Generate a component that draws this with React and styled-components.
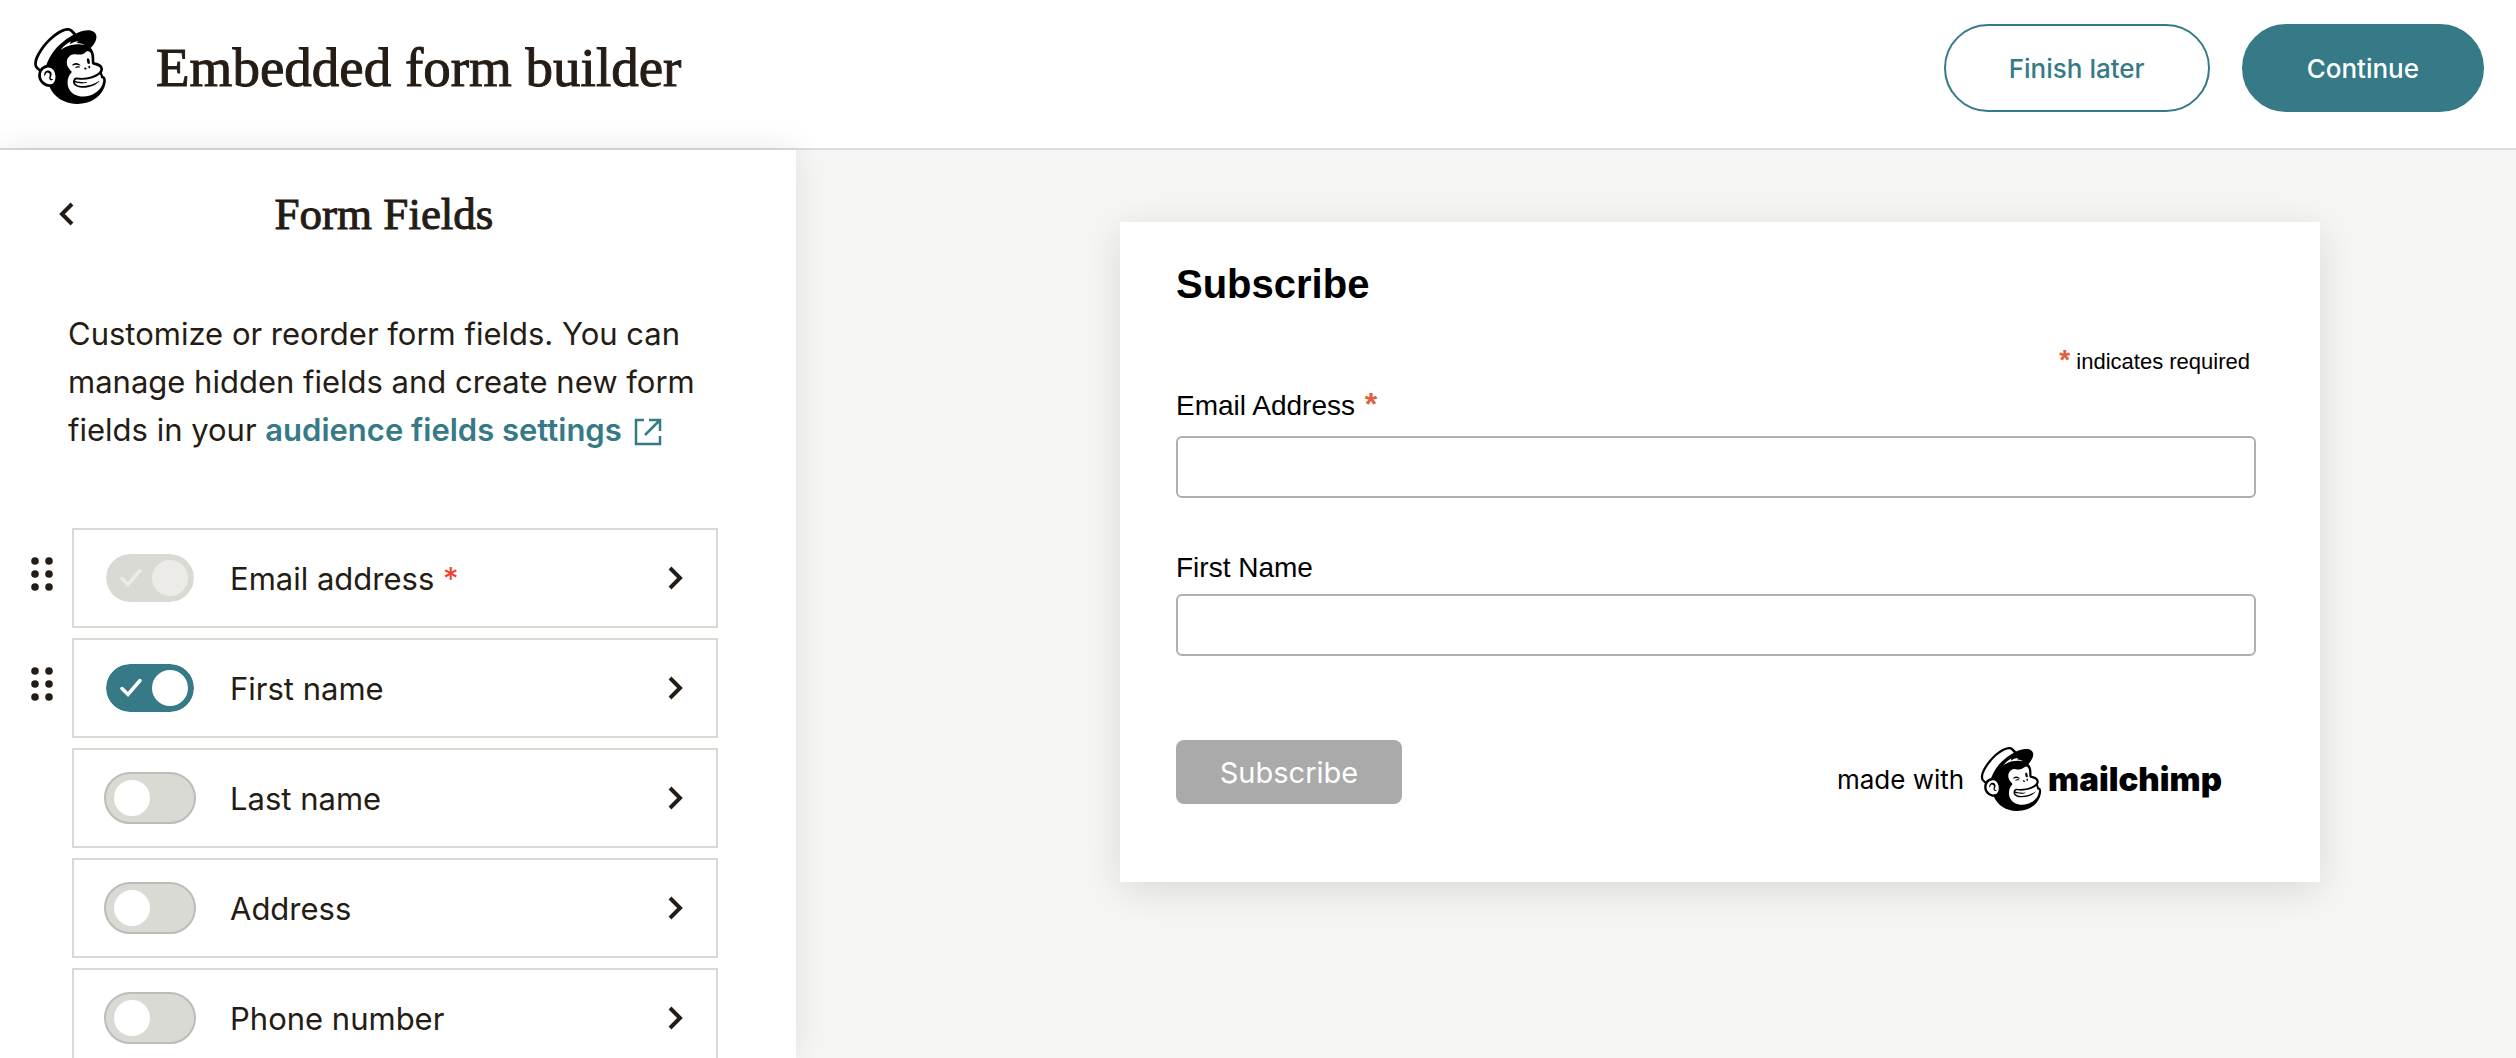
import React, { useState } from "react";
import styled, { createGlobalStyle } from "styled-components";
import { SiMailchimp } from "react-icons/si";

const GlobalStyle = createGlobalStyle`
  * {
    box-sizing: border-box;
  }

  body {
    margin: 0;
    background-color: #fff;
    color: #241c15;
    font-family: Inter, "Liberation Sans", sans-serif;
  }
`;

const Page = styled.div`
  display: flex;
  flex-direction: column;
  height: 100vh;
  overflow: hidden;
`;

const Header = styled.header`
  display: flex;
  flex-shrink: 0;
  align-items: flex-start;
  justify-content: space-between;
  height: 150px;
  padding: 24px 32px;
  border-bottom: 2px solid #dcdcdc;
`;

const Brand = styled.div`
  display: flex;
  align-items: center;
  gap: 48px;
  height: 84px;
`;

const Freddie = styled(SiMailchimp)`
  display: block;
  flex-shrink: 0;
  width: ${({ $size }) => $size}px;
  height: ${({ $size }) => $size}px;
  color: #000;
`;

const PageTitle = styled.h1`
  margin: 0;
  padding-top: 4px;
  font-family: "Liberation Serif", serif;
  font-size: 55px;
  font-weight: 400;
  line-height: 64px;
  -webkit-text-stroke: 1px currentColor;
`;

const Actions = styled.div`
  display: flex;
  gap: 32px;
`;

const Button = styled.button`
  height: 88px;
  padding: 0 63px;
  border: 2px solid #357a86;
  border-radius: 44px;
  background-color: ${({ $primary }) => ($primary ? "#357a86" : "#fff")};
  color: ${({ $primary }) => ($primary ? "#fff" : "#357a86")};
  font-family: inherit;
  font-size: 26px;
  font-weight: 500;
  cursor: pointer;
`;

const Main = styled.main`
  display: flex;
  flex: 1;
  min-height: 0;
`;

const Sidebar = styled.aside`
  z-index: 1;
  flex: 0 0 796px;
  padding: 32px 78px 0 30px;
  overflow-y: auto;
  scrollbar-width: none;
  background-color: #fff;
  box-shadow: 0 0 32px rgba(0, 0, 0, 0.1);
`;

const PanelHead = styled.div`
  display: grid;
  grid-template-columns: 48px 1fr 28px;
  align-items: center;
  height: 64px;
  padding: 0 12px;
`;

const IconButton = styled.button`
  display: flex;
  align-items: center;
  justify-content: center;
  width: 48px;
  height: 48px;
  padding: 0;
  border: none;
  background: none;
  color: #241c15;
  cursor: pointer;
`;

const PanelTitle = styled.h2`
  margin: 0;
  font-family: "Liberation Serif", serif;
  font-size: 45px;
  font-weight: 400;
  line-height: 48px;
  text-align: center;
  -webkit-text-stroke: 1px currentColor;
`;

const Intro = styled.p`
  margin: 64px 0 74px;
  padding-left: 38px;
  font-size: 31px;
  line-height: 48px;
`;

const SettingsLink = styled.a`
  color: #357a86;
  font-weight: 600;
  text-decoration: none;

  svg {
    margin-left: 12px;
    vertical-align: -5px;
  }
`;

const FieldList = styled.ul`
  display: flex;
  flex-direction: column;
  gap: 10px;
  margin: 0;
  padding: 0;
  list-style: none;
`;

const FieldItem = styled.li`
  display: grid;
  grid-template-columns: 24px 1fr;
  column-gap: 18px;
`;

const DragHandle = styled.span`
  padding-top: 28px;
  cursor: grab;
`;

const FieldCard = styled.div`
  display: flex;
  align-items: center;
  grid-column: 2;
  height: 100px;
  padding: 0 16px 0 30px;
  border: 2px solid #dadad4;
`;

const FieldName = styled.label`
  flex: 1;
  margin-left: 34px;
  font-size: 31px;
`;

const Asterisk = styled.span`
  color: #f03e2c;
`;

const Switch = styled.span`
  position: relative;
  display: flex;
  width: 92px;
  height: 52px;
`;

const SwitchInput = styled.input`
  appearance: none;
  display: flex;
  align-items: center;
  width: 92px;
  height: 52px;
  margin: 0;
  padding: 0 8px;
  border: 2px solid #bcbcb9;
  border-radius: 26px;
  background-color: #dadad4;
  cursor: pointer;

  &::before {
    content: "";
    width: 36px;
    height: 36px;
    border-radius: 50%;
    background-color: #fff;
  }

  &:checked {
    justify-content: flex-end;
    padding: 0 6px;
    border-color: #fff;
    background-color: #357a86;
    background-clip: padding-box;
  }

  &:disabled {
    background-color: #dadad4;
    cursor: default;
  }

  &:disabled::before {
    background-color: #ecebe8;
  }
`;

const SwitchCheck = styled.svg`
  position: absolute;
  top: 16px;
  left: 15px;
  color: ${({ $disabled }) => ($disabled ? "#ecebe8" : "#fff")};
  pointer-events: none;
`;

const Preview = styled.section`
  flex: 1;
  min-width: 0;
  padding: 72px 0 0 128px;
  background-color: #f6f6f4;
`;

const FormCard = styled.form`
  max-width: 1200px;
  min-height: 660px;
  margin: 0 auto;
  padding: 38px 64px 0 56px;
  background-color: #fff;
  box-shadow: 0 8px 40px rgba(0, 0, 0, 0.12);
  color: #000;
  font-family: "Liberation Sans", Arial, sans-serif;
`;

const FormTitle = styled.h2`
  margin: 0;
  font-size: 40px;
  line-height: 48px;
`;

const RequiredNote = styled.p`
  margin: 40px 6px 0 0;
  font-size: 22px;
  line-height: 28px;
  text-align: right;
`;

const RequiredMark = styled.span`
  margin-left: 2px;
  color: #e0603c;
  font-size: ${({ $size }) => $size}px;
  font-weight: 700;
  line-height: 1px;
`;

const FormField = styled.div`
  display: flex;
  flex-direction: column;
  gap: ${({ $gap }) => $gap}px;
  margin-top: ${({ $top }) => $top}px;
`;

const FormLabel = styled.label`
  font-size: 28px;
  line-height: 32px;
`;

const TextInput = styled.input`
  width: 100%;
  height: 62px;
  padding: 0 16px;
  border: 2px solid #abb0b2;
  border-radius: 6px;
  background-color: #fff;
  font-family: inherit;
  font-size: 28px;
`;

const FormFooter = styled.div`
  display: flex;
  align-items: flex-start;
  justify-content: space-between;
  margin-top: 84px;
`;

const SubmitButton = styled.button`
  width: 226px;
  height: 64px;
  padding: 0;
  border: none;
  border-radius: 8px;
  background-color: #aaa;
  color: #fff;
  font-family: Inter, sans-serif;
  font-size: 29px;
`;

const MadeWith = styled.a`
  display: flex;
  align-items: center;
  margin: 7px 34px 0 0;
  color: #000;
  font-family: Inter, sans-serif;
  font-size: 26px;
  text-decoration: none;

  svg {
    margin: 0 5px 0 15px;
  }
`;

const Wordmark = styled.span`
  font-size: 33px;
  font-weight: 900;
  line-height: 36px;
`;

const FIELDS = [
  { id: "email", name: "Email address", required: true, on: true, draggable: true },
  { id: "first", name: "First name", on: true, draggable: true },
  { id: "last", name: "Last name" },
  { id: "address", name: "Address" },
  { id: "phone", name: "Phone number" },
];

const Chevron = ({ left }) => (
  <svg width="16" height="24" viewBox="0 0 16 24" fill="none" stroke="currentColor" strokeWidth="4">
    <path d={left ? "M14 2 4 12 14 22" : "M2 2 12 12 2 22"} />
  </svg>
);

const ExternalIcon = () => (
  <svg width="28" height="28" viewBox="0 0 28 28" fill="none" stroke="currentColor" strokeWidth="2.500">
    <path d="M10 2H2V26H26V18M15 2H26V13M26 2 11 17" />
  </svg>
);

const DragDots = () => (
  <svg width="24" height="36" viewBox="0 0 24 36" fill="#241c15">
    {[5, 18, 31].map((y) => (
      <React.Fragment key={y}>
        <circle cx="5" cy={y} r="3.800" />
        <circle cx="19" cy={y} r="3.800" />
      </React.Fragment>
    ))}
  </svg>
);

const FieldRow = ({ field, checked, onToggle }) => {
  const inputId = `field-${field.id}`;
  return (
    <FieldItem>
      {field.draggable && (
        <DragHandle>
          <DragDots />
        </DragHandle>
      )}
      <FieldCard>
        <Switch>
          <SwitchInput
            type="checkbox"
            id={inputId}
            checked={checked}
            disabled={field.required}
            onChange={() => onToggle(field.id)}
          />
          {checked && (
            <SwitchCheck
              width="24"
              height="20"
              viewBox="0 0 24 20"
              fill="none"
              stroke="currentColor"
              strokeWidth="3.500"
              strokeLinecap="round"
              $disabled={field.required}
            >
              <path d="M3 10.500 9 16.500 21 2.500" />
            </SwitchCheck>
          )}
        </Switch>
        <FieldName htmlFor={inputId}>
          {field.name} {field.required && <Asterisk>*</Asterisk>}
        </FieldName>
        <IconButton type="button" aria-label={`Edit ${field.name}`}>
          <Chevron />
        </IconButton>
      </FieldCard>
    </FieldItem>
  );
};

const App = () => {
  const [enabled, setEnabled] = useState(
    FIELDS.filter((field) => field.on).map((field) => field.id)
  );

  const toggleField = (id) => {
    setEnabled((prev) =>
      prev.includes(id) ? prev.filter((item) => item !== id) : [...prev, id]
    );
  };

  return (
    <>
      <GlobalStyle />
      <Page>
        <Header>
          <Brand>
            <Freddie $size={76} />
            <PageTitle>Embedded form builder</PageTitle>
          </Brand>
          <Actions>
            <Button type="button">Finish later</Button>
            <Button type="button" $primary>
              Continue
            </Button>
          </Actions>
        </Header>
        <Main>
          <Sidebar>
            <PanelHead>
              <IconButton type="button" aria-label="Back">
                <Chevron left />
              </IconButton>
              <PanelTitle>Form Fields</PanelTitle>
            </PanelHead>
            <Intro>
              Customize or reorder form fields. You can manage hidden fields and
              create new form fields in your{" "}
              <SettingsLink href="#settings">
                audience fields settings
                <ExternalIcon />
              </SettingsLink>
            </Intro>
            <FieldList>
              {FIELDS.map((field) => (
                <FieldRow
                  key={field.id}
                  field={field}
                  checked={enabled.includes(field.id)}
                  onToggle={toggleField}
                />
              ))}
            </FieldList>
          </Sidebar>
          <Preview>
            <FormCard onSubmit={(e) => e.preventDefault()}>
              <FormTitle>Subscribe</FormTitle>
              <RequiredNote>
                <RequiredMark $size={28}>*</RequiredMark> indicates required
              </RequiredNote>
              <FormField $top={14} $gap={14}>
                <FormLabel htmlFor="mce-email">
                  Email Address <RequiredMark $size={32}>*</RequiredMark>
                </FormLabel>
                <TextInput id="mce-email" type="email" />
              </FormField>
              <FormField $top={54} $gap={10}>
                <FormLabel htmlFor="mce-fname">First Name</FormLabel>
                <TextInput id="mce-fname" type="text" />
              </FormField>
              <FormFooter>
                <SubmitButton type="submit">Subscribe</SubmitButton>
                <MadeWith href="#mailchimp">
                  made with
                  <Freddie $size={64} />
                  <Wordmark>mailchimp</Wordmark>
                </MadeWith>
              </FormFooter>
            </FormCard>
          </Preview>
        </Main>
      </Page>
    </>
  );
};

export default App;
